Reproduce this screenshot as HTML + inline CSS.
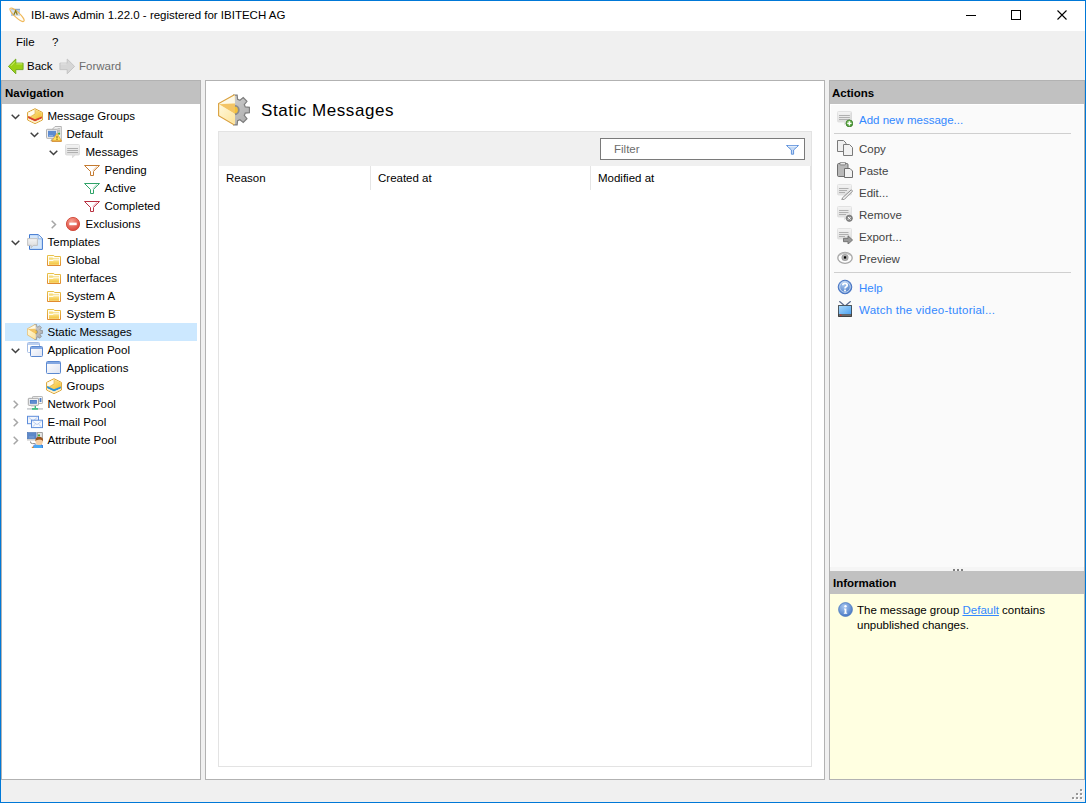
<!DOCTYPE html>
<html><head><meta charset="utf-8">
<style>
*{margin:0;padding:0;box-sizing:border-box}
html,body{width:1086px;height:803px;overflow:hidden}
body{position:relative;background:#f0f0f0;font-family:"Liberation Sans",sans-serif;font-size:11.5px;color:#000}
.a{position:absolute}
.t{position:absolute;white-space:nowrap;line-height:15px}
svg{position:absolute;overflow:visible}
.hd{position:absolute;background:#c1c1c1;font-weight:bold}
.lk{color:#3388ff}
.ac{color:#444}
</style></head><body>
<svg width="0" height="0" style="position:absolute;left:0;top:0">
<defs>
<linearGradient id="gy" x1="0" y1="0" x2="0" y2="1"><stop offset="0" stop-color="#fff6c8"/><stop offset="1" stop-color="#f5c842"/></linearGradient>
<linearGradient id="gfold" x1="0" y1="0" x2="0" y2="1"><stop offset="0" stop-color="#fbe38a"/><stop offset="1" stop-color="#f2c23a"/></linearGradient>
<linearGradient id="gwin" x1="0" y1="0" x2="1" y2="1"><stop offset="0" stop-color="#ffffff"/><stop offset="1" stop-color="#dde3f2"/></linearGradient>
<linearGradient id="gbub" x1="0" y1="0" x2="0" y2="1"><stop offset="0" stop-color="#f4f4f4"/><stop offset="1" stop-color="#d9d9d9"/></linearGradient>
<linearGradient id="gfb" x1="0" y1="0" x2="0" y2="1"><stop offset="0" stop-color="#e8c24a"/><stop offset="1" stop-color="#e08a30"/></linearGradient>
<linearGradient id="gboxtop" x1="0" y1="0" x2="1" y2="1"><stop offset="0" stop-color="#fbe6a8"/><stop offset="0.6" stop-color="#f6cf58"/><stop offset="1" stop-color="#f0b82a"/></linearGradient>
<linearGradient id="ggear" x1="0" y1="0" x2="1" y2="1"><stop offset="0" stop-color="#d8d8d8"/><stop offset="1" stop-color="#a9a9a9"/></linearGradient>
<linearGradient id="gbox" x1="0" y1="0" x2="1" y2="1"><stop offset="0" stop-color="#fff8dc"/><stop offset="1" stop-color="#fde49a"/></linearGradient>
<linearGradient id="gtv" x1="0" y1="0" x2="1" y2="1"><stop offset="0" stop-color="#a8d8fc"/><stop offset="1" stop-color="#4ea2f0"/></linearGradient>
<radialGradient id="gred" cx="0.4" cy="0.3" r="0.8"><stop offset="0" stop-color="#f7a090"/><stop offset="1" stop-color="#d83a30"/></radialGradient>
<radialGradient id="gblue" cx="0.4" cy="0.3" r="0.8"><stop offset="0" stop-color="#a8c8f0"/><stop offset="1" stop-color="#3f70c0"/></radialGradient>
<radialGradient id="ggreen" cx="0.4" cy="0.3" r="0.8"><stop offset="0" stop-color="#8fd070"/><stop offset="1" stop-color="#3a8a28"/></radialGradient>

<symbol id="i-mg" viewBox="0 0 16 16">
 <path d="M8 0.7L15.4 4.4V12L8 15.6L0.6 12V4.4Z" fill="#fff5d2" stroke="#d9a232" stroke-width="1"/>
 <path d="M1.2 4.8L8 1.4L14.8 4.8V9L8 11.8L1.2 8.6Z" fill="url(#gboxtop)"/>
 <path d="M1.2 4.8L8 1.4V5.5L4.2 7.8L1.2 8.2Z" fill="#fffbec"/>
 <path d="M8 1.6V6.2L4 8.6" fill="none" stroke="#e0b458" stroke-width="0.7"/>
 <path d="M1.1 8.1L8 11.3L14.9 8.5V10.6L8 13.6L1.1 10.3Z" fill="#d6402a"/>
 <path d="M1.1 10.3L8 13.6L14.9 10.6V11.8L8 15L1.1 11.8Z" fill="#fff0c8"/>
</symbol>

<symbol id="i-def" viewBox="0 0 16 16">
 <path d="M9 0.5H15.3V14.8H6.6V3Z" fill="#f2f2f2" stroke="#b4b4b4"/>
 <path d="M11.5 2.8H14.2M11.5 4.3H14.2M11.5 5.8H14.2" stroke="#9c9c9c" stroke-width="0.8"/>
 <rect x="0.5" y="3.3" width="10.8" height="9" rx="0.6" fill="#efefef" stroke="#b0b0b0"/>
 <rect x="2" y="4.8" width="8" height="6" fill="#5d8bd0"/>
 <path d="M3 9.6H7" stroke="#9cbbe8" stroke-width="0.8"/>
 <path d="M5.2 15.2Q5 13.5 6 13.5" fill="none" stroke="#909090" stroke-width="1"/>
 <path d="M11 7.3L15.6 15.1H5.8Z" fill="#ffe45c" stroke="#e0a040" stroke-width="0.8" stroke-linejoin="round"/>
 <path d="M5.8 15.2H15.6" stroke="#d48a28" stroke-width="1.1"/>
 <rect x="10.5" y="9.9" width="1" height="2.6" fill="#8a5a18"/>
 <rect x="10.5" y="13" width="1" height="1" fill="#8a5a18"/>
 <circle cx="13.1" cy="7.7" r="1.1" fill="#3aa83a"/>
</symbol>

<symbol id="i-msg" viewBox="0 0 16 16">
 <path d="M1.5 0.5H13.5Q14.5 0.5 14.5 1.5V10Q14.5 11 13.5 11H10L7.5 13.8V11H1.5Q0.5 11 0.5 10V1.5Q0.5 0.5 1.5 0.5Z" fill="url(#gbub)" stroke="#dedede"/>
 <path d="M2.2 4.5H13M2.2 6.5H13M2.2 8.5H13" stroke="#a9a9a9" stroke-width="0.9"/>
</symbol>

<symbol id="i-fo" viewBox="0 0 16 16">
 <path d="M0.5 3.5H15.5L9.5 9.5V13.5H6.5V9.5Z" fill="#fff" stroke="#c47a30" stroke-width="1"/>
 <path d="M13 4.5L8.8 8.8" stroke="#f0d8c0" stroke-width="1.5"/>
</symbol>
<symbol id="i-fg" viewBox="0 0 16 16">
 <path d="M0.5 3.5H15.5L9.5 9.5V13.5H6.5V9.5Z" fill="#fff" stroke="#2fa368" stroke-width="1"/>
 <path d="M13 4.5L8.8 8.8" stroke="#bfe6d0" stroke-width="1.5"/>
</symbol>
<symbol id="i-fr" viewBox="0 0 16 16">
 <path d="M0.5 3.5H15.5L9.5 9.5V13.5H6.5V9.5Z" fill="#fff" stroke="#b83040" stroke-width="1"/>
 <path d="M13 4.5L8.8 8.8" stroke="#efc0c8" stroke-width="1.5"/>
</symbol>

<symbol id="i-exc" viewBox="0 0 16 16">
 <circle cx="8" cy="8" r="6.6" fill="url(#gred)" stroke="#d04838" stroke-width="0.9"/>
 <rect x="4.3" y="6.6" width="7.4" height="2.6" fill="#fff"/>
</symbol>

<symbol id="i-tpl" viewBox="0 0 16 16">
 <path d="M2.5 0.6H11.4L15.4 4.6V15.4H2.5Z" fill="#d3e6fb" stroke="#3f78d0" stroke-width="1"/>
 <path d="M11.2 1V4.8H15" fill="#eaf3fd" stroke="#7aa4e0" stroke-width="0.8"/>
 <path d="M0.6 4.6H10.4V11.4H6.2L4.2 13.8V11.4H0.6Z" fill="url(#gbub)" stroke="#bdbdbd" stroke-width="0.9"/>
</symbol>

<symbol id="i-fld" viewBox="0 0 16 16">
 <path d="M1.5 3.5H7.8L8.6 4.5H14.5V13.5H1.5Z" fill="#fffdf2" stroke="url(#gfb)" stroke-width="1"/>
 <path d="M3 5.4H6.4L7.5 6.2H13V7.2H7.5L6.4 7.7H3Z" fill="#f6dc7c"/>
 <path d="M3 9H6.8L7.8 8.2H13V12.8H3Z" fill="url(#gfold)"/>
</symbol>

<symbol id="i-sm" viewBox="0 0 32 32">
 <clipPath id="cgear"><rect x="15" y="0" width="18" height="32"/></clipPath>
 <g clip-path="url(#cgear)">
 <path fill="url(#ggear)" stroke="#7e7e7e" stroke-width="1.2" d="M27.27 12.91 L31.47 13.36 L31.47 18.64 L27.27 19.09 L26.30 21.43 L28.95 24.72 L25.22 28.45 L21.93 25.80 L19.59 26.77 L19.14 30.97 L13.86 30.97 L13.41 26.77 L11.07 25.80 L7.78 28.45 L4.05 24.72 L6.70 21.43 L5.73 19.09 L1.53 18.64 L1.53 13.36 L5.73 12.91 L6.70 10.57 L4.05 7.28 L7.78 3.55 L11.07 6.20 L13.41 5.23 L13.86 1.03 L19.14 1.03 L19.59 5.23 L21.93 6.20 L25.22 3.55 L28.95 7.28 L26.30 10.57Z"/>
 <circle cx="16.5" cy="16" r="4.3" fill="#f3c03a" stroke="#8c8c8c" stroke-width="1.8"/>
 </g>
 <path d="M0.6 9.6L16.2 0.8L17 1.6V12L16.2 12.5V19.5L17 20V29.8L15.8 30.8L0.6 21.8Z" fill="#ffeeb8"/>
 <path d="M1.2 9.8L16 1.5L17 9.6Z" fill="#fdf8e6"/>
 <path d="M1.2 10.2L17 9.6V12L16.2 12.5V19.5Z" fill="#f3c465"/>
 <path d="M1.2 10.6L16.2 19.5L17 20V29.8L1.2 21.3Z" fill="url(#gbox)"/>
 <path d="M16.4 0.8L0.6 9.6V21.8L16 30.8" fill="none" stroke="#d9a040" stroke-width="1.1"/>
</symbol>

<symbol id="i-ap" viewBox="0 0 16 16">
 <rect x="0.5" y="0.5" width="12" height="10" rx="1" fill="#fff" stroke="#a4bce4"/>
 <rect x="1" y="1" width="11" height="2" fill="#bcd0f0"/>
 <rect x="3.5" y="4.5" width="12" height="10" rx="1" fill="url(#gwin)" stroke="#5a88d0"/>
 <rect x="4" y="5" width="11" height="2" fill="#84a8e2"/>
</symbol>

<symbol id="i-win" viewBox="0 0 16 16">
 <rect x="0.5" y="1.5" width="14" height="12" rx="1" fill="url(#gwin)" stroke="#5a88d0"/>
 <rect x="1" y="2" width="13" height="2" fill="#84a8e2"/>
</symbol>

<symbol id="i-grp" viewBox="0 0 16 16">
 <path d="M8 0.7L15.4 4.4V12L8 15.6L0.6 12V4.4Z" fill="#fff5d2" stroke="#d9a232" stroke-width="1"/>
 <path d="M1.2 4.8L8 1.4L14.8 4.8V9L8 11.8L1.2 8.6Z" fill="url(#gboxtop)"/>
 <path d="M1.2 4.8L8 1.4V5.5L4.2 7.8L1.2 8.2Z" fill="#fffbec"/>
 <path d="M8 1.6V6.2L4 8.6" fill="none" stroke="#e0b458" stroke-width="0.7"/>
 <path d="M1.1 8.1L8 11.3L14.9 8.5V10.6L8 13.6L1.1 10.3Z" fill="#2a90d8"/>
 <path d="M1.1 10.3L8 13.6L14.9 10.6V11.8L8 15L1.1 11.8Z" fill="#fff0c8"/>
</symbol>

<symbol id="i-net" viewBox="0 0 16 16">
 <rect x="5.5" y="0.5" width="10" height="7" rx="0.6" fill="#f4f4f4" stroke="#b8b8b8"/>
 <rect x="12.6" y="2" width="1.8" height="4" fill="#4f7fc8"/>
 <rect x="1.3" y="2.3" width="10.2" height="7" rx="0.6" fill="#f2f2f2" stroke="#a8a8a8"/>
 <rect x="2.9" y="4" width="7" height="3.8" fill="#4f7fc8"/>
 <path d="M4 6H9" stroke="#8aaee6" stroke-width="0.6"/>
 <rect x="4" y="9.6" width="5" height="0.9" fill="#c8c8c8"/>
 <rect x="0" y="12.1" width="16" height="1.6" fill="#c9cdd0"/>
 <rect x="7.6" y="10" width="1.4" height="2.5" fill="#3cba7c"/>
 <rect x="5" y="12" width="6" height="1.8" fill="#45c080"/>
</symbol>

<symbol id="i-mail" viewBox="0 0 16 16">
 <rect x="0.5" y="2.3" width="11" height="7.4" fill="#f2f6fc" stroke="#5d8ddb"/>
 <path d="M1.5 3.2L6 7L10.5 3.2" fill="none" stroke="#a8c2ec" stroke-width="0.8"/>
 <rect x="4.5" y="6.2" width="11" height="7.4" fill="#f6f9fe" stroke="#5d8ddb"/>
 <path d="M5.4 7.2L10 10.6L14.6 7.2M5.6 12.8L8.6 10M14.4 12.8L11.4 10" fill="none" stroke="#a8c2ec" stroke-width="0.8"/>
</symbol>

<symbol id="i-attr" viewBox="0 0 16 16">
 <rect x="10.3" y="0.6" width="5" height="8" fill="#e8e8e8" stroke="#8a8a8a" stroke-width="0.8"/>
 <rect x="0.3" y="0.5" width="8.8" height="6.3" fill="#5c88c9" stroke="#4a74b4" stroke-width="0.6"/>
 <path d="M2 5H7" stroke="#94b4e4" stroke-width="0.6"/>
 <rect x="0" y="7" width="9.5" height="1.6" fill="#d0d0d0"/>
 <path d="M3.5 9.5Q3.2 11.6 5.5 11.6H8.5" fill="none" stroke="#8a8a8a" stroke-width="1"/>
 <circle cx="12" cy="3.4" r="1.1" fill="#3aa83a"/>
 <path d="M5.6 16Q6.2 12.2 12.2 12.2Q17 12.2 16.6 16Z" fill="#4aa8f4"/>
 <path d="M6 15.6Q6.6 12.6 9 12.4M15.8 15.6Q15.4 12.8 14 12.4" fill="none" stroke="#2a48b8" stroke-width="0.9" stroke-dasharray="1 0.6"/>
 <rect x="4.8" y="14.8" width="1.6" height="1.2" fill="#e88a20"/>
 <circle cx="12.2" cy="9.4" r="3.6" fill="#f6cfa4"/>
 <path d="M8.4 9.6Q8 4.8 12.2 4.8Q16.6 4.8 16 9.6Q15.4 7.6 13.4 7.8Q13 7 12.4 7.8Q10 7.6 9.4 8.2Q8.8 8.6 8.4 9.6Z" fill="#9a5420"/>
</symbol>

<symbol id="a-add" viewBox="0 0 16 16">
 <path d="M1.5 0.5H13.5Q14.5 0.5 14.5 1.5V10Q14.5 11 13.5 11H10L7.5 13.8V11H1.5Q0.5 11 0.5 10V1.5Q0.5 0.5 1.5 0.5Z" fill="url(#gbub)" stroke="#e2e2e2"/>
 <path d="M14 1.5V10.5" stroke="#cfcfcf" stroke-width="0.8"/>
 <path d="M2 4.5H12.9M2 6.5H12.9M2 8.5H12.9" stroke="#a9a9a9" stroke-width="0.9"/>
 <circle cx="12.4" cy="12.4" r="3.4" fill="url(#ggreen)" stroke="#3a7e2a" stroke-width="0.8"/>
 <path d="M12.4 10.3V14.5M10.3 12.4H14.5" stroke="#fff" stroke-width="1.4"/>
</symbol>
<symbol id="a-copy" viewBox="0 0 16 16">
 <path d="M0.5 0.5H6.5L9 3V11.5H0.5Z" fill="#efefef" stroke="#7a7a7a"/>
 <path d="M6.5 4.5H12.5L15.5 7.5V15.5H6.5Z" fill="#f2f2f2" stroke="#7a7a7a"/>
</symbol>
<symbol id="a-paste" viewBox="0 0 16 16">
 <rect x="0.5" y="1.5" width="10.5" height="13" rx="1.2" fill="#b8b8b8" stroke="#6e6e6e"/>
 <rect x="3" y="0.3" width="5.5" height="2.6" rx="0.6" fill="#e8e8e8" stroke="#6e6e6e" stroke-width="0.8"/>
 <path d="M7.5 6.5H13L15.5 9V15.5H7.5Z" fill="#f2f2f2" stroke="#6e6e6e"/>
</symbol>
<symbol id="a-edit" viewBox="0 0 16 16">
 <path d="M1.5 0.5H13.5Q14.5 0.5 14.5 1.5V10Q14.5 11 13.5 11H10L7.5 13.8V11H1.5Q0.5 11 0.5 10V1.5Q0.5 0.5 1.5 0.5Z" fill="url(#gbub)" stroke="#e2e2e2"/>
 <path d="M2 4.5H11.5M2 6.5H10M2 8.5H8" stroke="#a9a9a9" stroke-width="0.9"/>
 <path d="M14.3 5.8L15.6 7.1L7.2 15.5L4.8 16.2L5.5 13.8Z" fill="#efefef" stroke="#777" stroke-width="0.8"/>
</symbol>
<symbol id="a-rem" viewBox="0 0 16 16">
 <path d="M1.5 0.5H13.5Q14.5 0.5 14.5 1.5V10Q14.5 11 13.5 11H10L7.5 13.8V11H1.5Q0.5 11 0.5 10V1.5Q0.5 0.5 1.5 0.5Z" fill="url(#gbub)" stroke="#e2e2e2"/>
 <path d="M2 4.5H11.5M2 6.5H11.5M2 8.5H9" stroke="#a9a9a9" stroke-width="0.9"/>
 <circle cx="12.3" cy="12.3" r="3.1" fill="#8a8a8a" stroke="#666" stroke-width="0.7"/>
 <path d="M11 11L13.6 13.6M13.6 11L11 13.6" stroke="#fff" stroke-width="1"/>
</symbol>
<symbol id="a-exp" viewBox="0 0 16 16">
 <path d="M1.5 0.5H13.5Q14.5 0.5 14.5 1.5V10Q14.5 11 13.5 11H10L7.5 13.8V11H1.5Q0.5 11 0.5 10V1.5Q0.5 0.5 1.5 0.5Z" fill="url(#gbub)" stroke="#e2e2e2"/>
 <path d="M2 4.5H11.5M2 6.5H11.5M2 8.5H8" stroke="#a9a9a9" stroke-width="0.9"/>
 <path d="M6.5 10.3H11V7.8L15.6 12L11 16.2V13.7H6.5Z" fill="#9a9a9a" stroke="#666" stroke-width="0.8"/>
</symbol>
<symbol id="a-prev" viewBox="0 0 16 16">
 <ellipse cx="8" cy="7.9" rx="7.2" ry="5.4" fill="#fdfdfd" stroke="#a6a6a6" stroke-width="1.3"/>
 <path d="M2.2 5.6Q8 0.6 13.8 5.6" fill="none" stroke="#c0c0c0" stroke-width="1.2"/>
 <circle cx="8" cy="7.5" r="3.5" fill="#a2a2a2"/>
 <circle cx="8" cy="7.5" r="2.4" fill="#b4b4b4"/>
 <rect x="6.9" y="6.3" width="2.3" height="2.3" fill="#000"/>
</symbol>
<symbol id="a-help" viewBox="0 0 16 16">
 <circle cx="8" cy="8" r="6.8" fill="url(#gblue)" stroke="#3d6cc0" stroke-width="0.9"/>
 <circle cx="8" cy="8" r="5.3" fill="none" stroke="#dce8f8" stroke-width="0.8"/>
 <path d="M5.8 6.3Q5.8 4.3 8 4.3Q10.2 4.3 10.2 6.2Q10.2 7.4 8.9 8Q8 8.4 8 9.6" fill="none" stroke="#fff" stroke-width="1.7"/>
 <rect x="7.1" y="10.6" width="1.8" height="1.7" fill="#fff"/>
</symbol>
<symbol id="a-tv" viewBox="0 0 16 16">
 <path d="M2.3 0.3L7 4.3M13.7 0.3L9 4.3" stroke="#5b6b8c" stroke-width="1.3"/>
 <rect x="1" y="4" width="14" height="12" rx="0.7" fill="#3a3a3a"/>
 <rect x="1.8" y="4.8" width="12.4" height="8.4" fill="url(#gtv)"/>
 <rect x="1.8" y="13.2" width="12.4" height="2" fill="#6a6a6a"/>
 <rect x="3.2" y="13.6" width="1.2" height="1.2" fill="#e02020"/>
</symbol>
<symbol id="i-info" viewBox="0 0 16 16">
 <circle cx="7.5" cy="7.5" r="6.9" fill="url(#gblue)" stroke="#4a78c0" stroke-width="0.8"/>
 <circle cx="7.5" cy="4.3" r="1.2" fill="#fff"/>
 <path d="M6 6.6H8.4V10.8H9.2V11.8H5.8V10.8H6.6V7.6H6Z" fill="#fff"/>
</symbol>
<symbol id="i-back" viewBox="0 0 16 16">
 <path d="M0.4 8.4L7.8 1V5.1H15.1V11.6H7.8V15.8Z" fill="#9bd016" stroke="#6ea81a" stroke-width="0.9" stroke-linejoin="round"/>
 <path d="M8.3 5.9H14.3M3 7.8L7 3.6" stroke="#d2f07e" stroke-width="0.9"/>
</symbol>
<symbol id="i-fwd" viewBox="0 0 16 16">
 <path d="M15.6 8.4L8.2 1V5.1H0.9V11.6H8.2V15.8Z" fill="#d6d6d6" stroke="#c2c2c2" stroke-width="0.9" stroke-linejoin="round"/>
 <path d="M1.7 5.9H7.5" stroke="#e8e8e8" stroke-width="0.9"/>
</symbol>
<symbol id="i-app" viewBox="0 0 16 16">
 <rect x="2" y="2" width="9" height="7" fill="#b4cdea"/>
 <path d="M2 2.3H11" stroke="#6f8fb8" stroke-width="0.8"/>
 <ellipse cx="8" cy="7.8" rx="9.4" ry="2.6" transform="rotate(43 8 7.8)" fill="#fffaf0" fill-opacity="0.45" stroke="#f0b858" stroke-width="1.1"/>
 <path d="M4.9 7.8L6.6 3.8L8.3 7.8" fill="none" stroke="#8a7a18" stroke-width="1.2"/>
</symbol>
<symbol id="i-funnel" viewBox="0 0 16 16">
 <path d="M2.5 4.5H14.5L9.6 9V13.2H7.4V9Z" fill="#c6dbf6" stroke="#5f92dc" stroke-width="1"/>
 <path d="M4 5.3H13" stroke="#eef5fd" stroke-width="0.9"/>
</symbol>
</defs></svg>

<!-- title bar -->
<div class="a" style="left:1px;top:1px;width:1084px;height:30px;background:#fff"></div>
<div class="t" style="left:31px;top:8px">IBI-aws Admin 1.22.0 - registered for IBITECH AG</div>
<!-- window controls -->
<div class="a" style="left:966px;top:15px;width:10px;height:1px;background:#000"></div>
<div class="a" style="left:1011px;top:10px;width:10px;height:10px;border:1px solid #000"></div>
<svg style="left:1057px;top:10px" width="10" height="10" viewBox="0 0 10 10"><path d="M0.5 0.5L9.5 9.5M9.5 0.5L0.5 9.5" stroke="#000" stroke-width="1.1"/></svg>

<!-- menu -->
<div class="t" style="left:16px;top:35px">File</div>
<div class="t" style="left:52px;top:35px">?</div>
<!-- toolbar -->
<div class="t" style="left:27px;top:59px">Back</div>
<div class="t" style="left:79px;top:59px;color:#6d6d6d">Forward</div>

<!-- NAV PANEL -->
<div class="a" style="left:1px;top:80px;width:200px;height:700px;border:1px solid #b2b2b2;background:#fff"></div>
<div class="hd" style="left:2px;top:81px;width:198px;height:23px"></div>
<div class="t" style="left:5px;top:86px;font-weight:bold">Navigation</div>
<div class="a" style="left:5px;top:323px;width:192px;height:18px;background:#cce8ff"></div>
<svg style="left:11px;top:114px" width="9" height="6" viewBox="0 0 9 6"><path d="M0.7 0.7L4.5 4.5L8.3 0.7" fill="none" stroke="#404040" stroke-width="1.5"/></svg>
<svg style="left:27px;top:108px" width="16" height="16"><use href="#i-mg"/></svg>
<div class="t" style="left:47.5px;top:109px">Message Groups</div>
<svg style="left:30px;top:132px" width="9" height="6" viewBox="0 0 9 6"><path d="M0.7 0.7L4.5 4.5L8.3 0.7" fill="none" stroke="#404040" stroke-width="1.5"/></svg>
<svg style="left:46px;top:126px" width="16" height="16"><use href="#i-def"/></svg>
<div class="t" style="left:66.5px;top:127px">Default</div>
<svg style="left:49px;top:150px" width="9" height="6" viewBox="0 0 9 6"><path d="M0.7 0.7L4.5 4.5L8.3 0.7" fill="none" stroke="#404040" stroke-width="1.5"/></svg>
<svg style="left:65px;top:144px" width="16" height="16"><use href="#i-msg"/></svg>
<div class="t" style="left:85.5px;top:145px">Messages</div>
<svg style="left:84px;top:162px" width="16" height="16"><use href="#i-fo"/></svg>
<div class="t" style="left:104.5px;top:163px">Pending</div>
<svg style="left:84px;top:180px" width="16" height="16"><use href="#i-fg"/></svg>
<div class="t" style="left:104.5px;top:181px">Active</div>
<svg style="left:84px;top:198px" width="16" height="16"><use href="#i-fr"/></svg>
<div class="t" style="left:104.5px;top:199px">Completed</div>
<svg style="left:51px;top:220px" width="6" height="9" viewBox="0 0 6 9"><path d="M0.7 0.7L4.5 4.5L0.7 8.3" fill="none" stroke="#a6a6a6" stroke-width="1.5"/></svg>
<svg style="left:65px;top:216px" width="16" height="16"><use href="#i-exc"/></svg>
<div class="t" style="left:85.5px;top:217px">Exclusions</div>
<svg style="left:11px;top:240px" width="9" height="6" viewBox="0 0 9 6"><path d="M0.7 0.7L4.5 4.5L8.3 0.7" fill="none" stroke="#404040" stroke-width="1.5"/></svg>
<svg style="left:27px;top:234px" width="16" height="16"><use href="#i-tpl"/></svg>
<div class="t" style="left:47.5px;top:235px">Templates</div>
<svg style="left:46px;top:252px" width="16" height="16"><use href="#i-fld"/></svg>
<div class="t" style="left:66.5px;top:253px">Global</div>
<svg style="left:46px;top:270px" width="16" height="16"><use href="#i-fld"/></svg>
<div class="t" style="left:66.5px;top:271px">Interfaces</div>
<svg style="left:46px;top:288px" width="16" height="16"><use href="#i-fld"/></svg>
<div class="t" style="left:66.5px;top:289px">System A</div>
<svg style="left:46px;top:306px" width="16" height="16"><use href="#i-fld"/></svg>
<div class="t" style="left:66.5px;top:307px">System B</div>
<svg style="left:27px;top:324px" width="16" height="16"><use href="#i-sm"/></svg>
<div class="t" style="left:47.5px;top:325px">Static Messages</div>
<svg style="left:11px;top:348px" width="9" height="6" viewBox="0 0 9 6"><path d="M0.7 0.7L4.5 4.5L8.3 0.7" fill="none" stroke="#404040" stroke-width="1.5"/></svg>
<svg style="left:27px;top:342px" width="16" height="16"><use href="#i-ap"/></svg>
<div class="t" style="left:47.5px;top:343px">Application Pool</div>
<svg style="left:46px;top:360px" width="16" height="16"><use href="#i-win"/></svg>
<div class="t" style="left:66.5px;top:361px">Applications</div>
<svg style="left:46px;top:378px" width="16" height="16"><use href="#i-grp"/></svg>
<div class="t" style="left:66.5px;top:379px">Groups</div>
<svg style="left:13px;top:400px" width="6" height="9" viewBox="0 0 6 9"><path d="M0.7 0.7L4.5 4.5L0.7 8.3" fill="none" stroke="#a6a6a6" stroke-width="1.5"/></svg>
<svg style="left:27px;top:396px" width="16" height="16"><use href="#i-net"/></svg>
<div class="t" style="left:47.5px;top:397px">Network Pool</div>
<svg style="left:13px;top:418px" width="6" height="9" viewBox="0 0 6 9"><path d="M0.7 0.7L4.5 4.5L0.7 8.3" fill="none" stroke="#a6a6a6" stroke-width="1.5"/></svg>
<svg style="left:27px;top:414px" width="16" height="16"><use href="#i-mail"/></svg>
<div class="t" style="left:47.5px;top:415px">E-mail Pool</div>
<svg style="left:13px;top:436px" width="6" height="9" viewBox="0 0 6 9"><path d="M0.7 0.7L4.5 4.5L0.7 8.3" fill="none" stroke="#a6a6a6" stroke-width="1.5"/></svg>
<svg style="left:27px;top:432px" width="16" height="16"><use href="#i-attr"/></svg>
<div class="t" style="left:47.5px;top:433px">Attribute Pool</div>

<!-- MIDDLE PANEL -->
<div class="a" style="left:205px;top:80px;width:620px;height:700px;border:1px solid #b2b2b2;background:#fff"></div>
<div class="t" style="left:261px;top:101px;font-size:17px;line-height:20px;letter-spacing:0.55px">Static Messages</div>
<div class="a" style="left:218px;top:131px;width:594px;height:636px;border:1px solid #e3e3e3;background:#fff"></div>
<div class="a" style="left:219px;top:132px;width:592px;height:34px;background:#f0f0f0"></div>
<div class="a" style="left:600px;top:138px;width:205px;height:22px;border:1px solid #7a7a7a;background:#fff"></div>
<div class="t" style="left:614px;top:142px;color:#6d6d6d">Filter</div>
<div class="a" style="left:370px;top:166px;width:1px;height:24px;background:#e5e5e5"></div>
<div class="a" style="left:590px;top:166px;width:1px;height:24px;background:#e5e5e5"></div>
<div class="a" style="left:810px;top:166px;width:1px;height:24px;background:#e5e5e5"></div>
<div class="t" style="left:226px;top:171px">Reason</div>
<div class="t" style="left:378px;top:171px">Created at</div>
<div class="t" style="left:598px;top:171px">Modified at</div>

<!-- ACTIONS PANEL -->
<div class="a" style="left:829px;top:80px;width:256px;height:700px;border:1px solid #b2b2b2;background:#fafafa"></div>
<div class="a" style="left:830px;top:104px;width:254px;height:463px;border-left:1px solid #fff;border-top:1px solid #fff;border-right:1px solid #fff"></div>
<div class="hd" style="left:830px;top:81px;width:254px;height:23px"></div>
<div class="t" style="left:832px;top:86px;font-weight:bold">Actions</div>
<div class="a" style="left:834px;top:133px;width:237px;height:1px;background:#cfcfcf"></div>
<div class="a" style="left:834px;top:272px;width:237px;height:1px;background:#cfcfcf"></div>
<div class="t lk" style="left:859px;top:113px">Add new message...</div>
<div class="t ac" style="left:859px;top:142px">Copy</div>
<div class="t ac" style="left:859px;top:164px">Paste</div>
<div class="t ac" style="left:859px;top:186px">Edit...</div>
<div class="t ac" style="left:859px;top:208px">Remove</div>
<div class="t ac" style="left:859px;top:230px">Export...</div>
<div class="t ac" style="left:859px;top:252px">Preview</div>
<div class="t lk" style="left:859px;top:281px">Help</div>
<div class="t lk" style="left:859px;top:303px;letter-spacing:0.23px">Watch the video-tutorial...</div>

<div class="a" style="left:830px;top:567px;width:254px;height:4px;background:#f5f5f5"></div>
<div class="a" style="left:953px;top:569px;width:2px;height:2px;background:#808080"></div>
<div class="a" style="left:957px;top:569px;width:2px;height:2px;background:#808080"></div>
<div class="a" style="left:961px;top:569px;width:2px;height:2px;background:#808080"></div>
<div class="hd" style="left:830px;top:571px;width:254px;height:23px"></div>
<div class="t" style="left:833px;top:576px;font-weight:bold">Information</div>
<div class="a" style="left:830px;top:594px;width:254px;height:185px;background:#ffffe1"></div>
<div class="t" style="left:857px;top:603px">The message group <span style="color:#3388ff;text-decoration:underline">Default</span> contains</div>
<div class="t" style="left:857px;top:618px">unpublished changes.</div>

<!-- resize grip -->
<div class="a" style="left:1081px;top:790px;width:2px;height:2px;background:#fff"></div>
<div class="a" style="left:1077px;top:794px;width:2px;height:2px;background:#fff"></div>
<div class="a" style="left:1081px;top:794px;width:2px;height:2px;background:#fff"></div>
<div class="a" style="left:1073px;top:798px;width:2px;height:2px;background:#fff"></div>
<div class="a" style="left:1077px;top:798px;width:2px;height:2px;background:#fff"></div>
<div class="a" style="left:1081px;top:798px;width:2px;height:2px;background:#fff"></div>

<div class="a" style="left:1080px;top:789px;width:2px;height:2px;background:#999"></div>
<div class="a" style="left:1076px;top:793px;width:2px;height:2px;background:#999"></div>
<div class="a" style="left:1080px;top:793px;width:2px;height:2px;background:#999"></div>
<div class="a" style="left:1072px;top:797px;width:2px;height:2px;background:#999"></div>
<div class="a" style="left:1076px;top:797px;width:2px;height:2px;background:#999"></div>
<div class="a" style="left:1080px;top:797px;width:2px;height:2px;background:#999"></div>


<svg style="left:9px;top:7px" width="16" height="16"><use href="#i-app"/></svg>
<svg style="left:8px;top:58px" width="16" height="16"><use href="#i-back"/></svg>
<svg style="left:59px;top:58px" width="16" height="16"><use href="#i-fwd"/></svg>
<svg style="left:218px;top:94px" width="32" height="32"><use href="#i-sm"/></svg>
<svg style="left:784px;top:141px" width="16" height="16"><use href="#i-funnel"/></svg>
<svg style="left:837px;top:111px" width="16" height="16"><use href="#a-add"/></svg>
<svg style="left:837px;top:140px" width="16" height="16"><use href="#a-copy"/></svg>
<svg style="left:837px;top:162px" width="16" height="16"><use href="#a-paste"/></svg>
<svg style="left:837px;top:184px" width="16" height="16"><use href="#a-edit"/></svg>
<svg style="left:837px;top:206px" width="16" height="16"><use href="#a-rem"/></svg>
<svg style="left:837px;top:228px" width="16" height="16"><use href="#a-exp"/></svg>
<svg style="left:837px;top:250px" width="16" height="16"><use href="#a-prev"/></svg>
<svg style="left:837px;top:279px" width="16" height="16"><use href="#a-help"/></svg>
<svg style="left:837px;top:301px" width="16" height="16"><use href="#a-tv"/></svg>
<svg style="left:838px;top:602px" width="16" height="16"><use href="#i-info"/></svg>

<!-- window border -->
<div class="a" style="left:0;top:0;width:1086px;height:803px;border:1px solid #0078d7;z-index:10"></div>
</body></html>
